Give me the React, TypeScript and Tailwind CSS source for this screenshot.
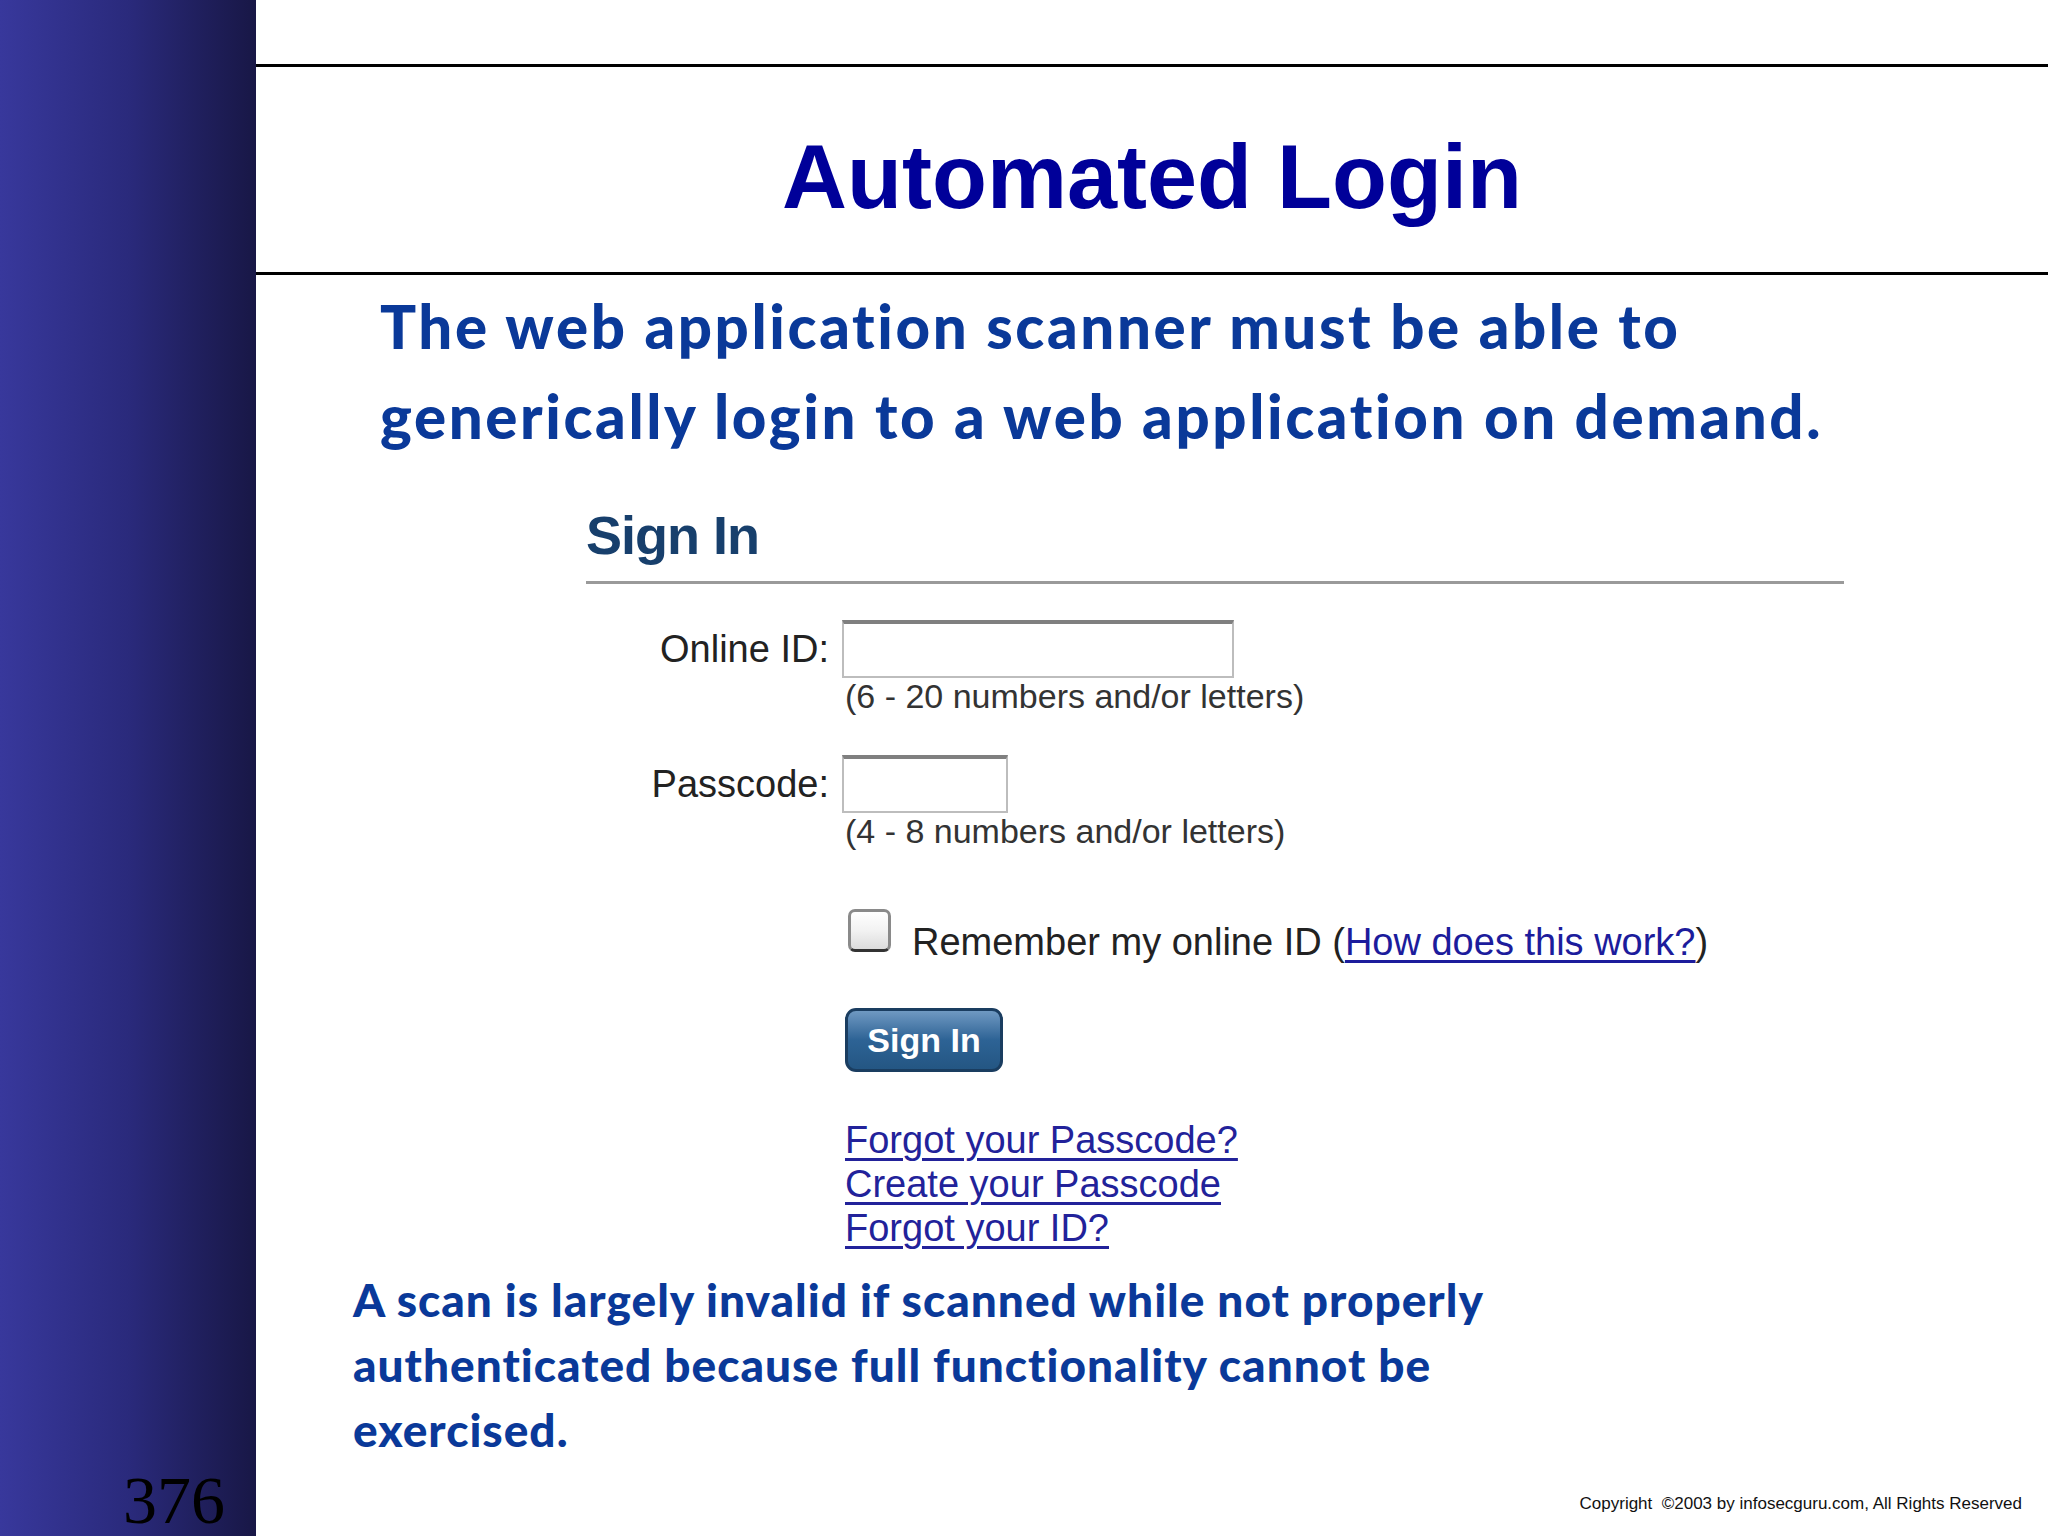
import React from "react";

export default function App() {
  return (
    <div className="flex h-[1536px] w-[2048px] overflow-hidden bg-white">
      <aside className="flex w-[256px] shrink-0 flex-col justify-end bg-gradient-to-r from-[#38389c] via-[#2a2a7c] to-[#181746] pb-[4px] pr-[31px] text-right">
        <div className="text-[68px] leading-[64px] text-black" style={{ fontFamily: '"Liberation Serif", serif' }}>
          376
        </div>
      </aside>

      <main className="flex min-w-0 flex-1 flex-col" style={{ fontFamily: '"Liberation Sans", Arial, sans-serif' }}>
        <header className="mt-[64px] flex h-[211px] items-center justify-center border-y-[3px] border-black pt-[14px]">
          <h1 className="text-[90px] font-bold leading-none text-[#000099]">Automated Login</h1>
        </header>

        <p
          className="mt-[6px] pl-[124px] text-[60px] font-black leading-[90px] tracking-[2.6px] text-[#0a3999]"
          style={{ fontFamily: 'Lato, "Noto Sans", sans-serif' }}
        >
          The web application scanner must be able to
          <br />
          generically login to a web application on demand.
        </p>

        <section className="mt-[44px] pl-[330px]">
          <div className="w-[1258px] border-b-[3px] border-[#9a9a9a] pb-[16px]">
            <h2 className="text-[54px] font-bold leading-[60px] tracking-[-1px] text-[#173f6c]">Sign In</h2>
          </div>

          <div className="mt-[36px] grid grid-cols-[243px_1fr] gap-x-[13px] text-[38px] text-[#222]">
            <div className="flex h-[58px] items-center justify-end leading-none">Online ID:</div>
            <div>
              <div className="h-[58px] w-[392px] border-2 border-t-[4px] border-[#bdbdbd] border-t-[#7f7f7f] bg-white" />
              <div className="pl-[3px] text-[34px] leading-[36px] text-[#333]">(6 - 20 numbers and/or letters)</div>
            </div>

            <div className="mt-[41px] flex h-[58px] items-center justify-end leading-none">Passcode:</div>
            <div className="mt-[41px]">
              <div className="h-[58px] w-[166px] border-2 border-t-[4px] border-[#bdbdbd] border-t-[#7f7f7f] bg-white" />
              <div className="pl-[3px] text-[34px] leading-[36px] text-[#333]">(4 - 8 numbers and/or letters)</div>
            </div>

            <div />
            <div className="pl-[6px]">
              <div className="mt-[60px] flex items-start gap-[21px]">
                <div className="h-[43px] w-[43px] rounded-[7px] border-[3px] border-[#8a8a8a] border-b-[#333] bg-gradient-to-b from-white via-[#f2f2f2] to-[#dcdcdc]" />
                <div className="mt-[11px] leading-[44px] text-[#222]">
                  Remember my online ID (
                  <a href="#" className="text-[#1c1c9c] underline decoration-[3px] underline-offset-[5px]">
                    How does this work?
                  </a>
                  )
                </div>
              </div>

              <button className="ml-[-3px] mt-[44px] flex h-[64px] w-[158px] items-center justify-center rounded-[11px] border-[3px] border-[#1a3d60] bg-gradient-to-b from-[#6f99c2] via-[#2d6395] to-[#245683] text-[34px] font-bold leading-none text-white">
                Sign In
              </button>

              <div className="ml-[-3px] mt-[46px] flex flex-col leading-[44px] text-[#22229a]">
                <a href="#" className="w-fit underline decoration-[3px] underline-offset-[5px]">Forgot your Passcode?</a>
                <a href="#" className="w-fit underline decoration-[3px] underline-offset-[5px]">Create your Passcode</a>
                <a href="#" className="w-fit underline decoration-[3px] underline-offset-[5px]">Forgot your ID?</a>
              </div>
            </div>
          </div>
        </section>

        <p
          className="mt-[17px] pl-[97px] text-[46px] font-black leading-[65px] tracking-[1px] text-[#0a3999]"
          style={{ fontFamily: 'Lato, "Noto Sans", sans-serif' }}
        >
          A scan is largely invalid if scanned while not properly
          <br />
          authenticated because full functionality cannot be
          <br />
          exercised.
        </p>

        <footer className="mt-auto pb-[22px] pr-[26px] text-right text-[17px] leading-[20px] text-[#111]">
          Copyright&nbsp; ©2003 by infosecguru.com, All Rights Reserved
        </footer>
      </main>
    </div>
  );
}
